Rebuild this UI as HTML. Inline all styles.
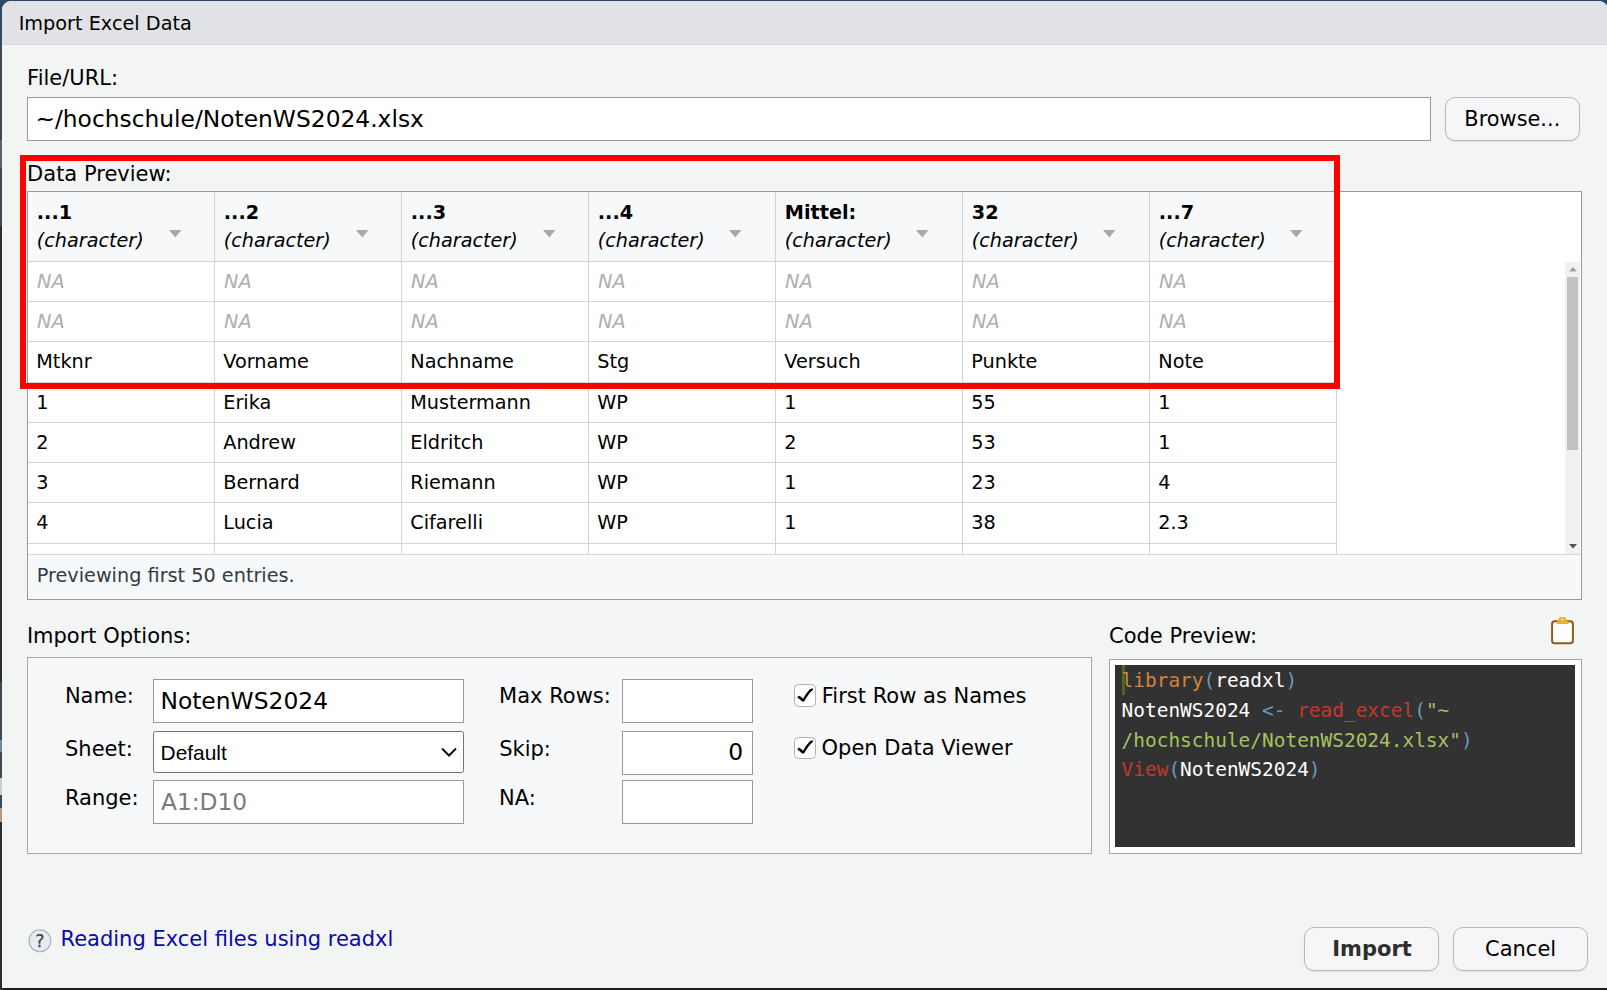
<!DOCTYPE html>
<html lang="en"><head><meta charset="utf-8"><title>Import Excel Data</title>
<style>
html,body{margin:0;padding:0}
body{width:1607px;height:990px;overflow:hidden;background:#1d1d1d;position:relative;font-family:"DejaVu Sans","Liberation Sans",sans-serif;color:#000}
.b{position:absolute;box-sizing:border-box}
.t{position:absolute;white-space:pre;line-height:1;display:block}
.inp{background:#fff;border:1px solid #999}
.btn{background:#f6f6f8;border:1px solid #b9b9b9;border-radius:10px;box-shadow:0 1px 1.5px rgba(0,0,0,.09)}
.pnl{background:#f7f8fa;border:1px solid #a6a6a6}
.hl{background:#cfd4d9}
.code{position:absolute;white-space:pre;line-height:1;font-family:"DejaVu Sans Mono","Liberation Mono",monospace;font-size:19.45px;color:#fff}
.k{color:#d08442}.p{color:#6c99bb}.f{color:#c4392b}.s{color:#a5c261}
</style></head><body>
<div class="b " style="left:0px;top:0px;width:1607.00px;height:4.00px;background:#2b4560"></div>
<div class="b " style="left:0px;top:0px;width:4.00px;height:990.00px;background:#2c2c2c"></div>
<div class="b " style="left:0px;top:0px;width:4.00px;height:226.00px;background:#3e4955"></div>
<div class="b " style="left:0px;top:140px;width:4.00px;height:28.00px;background:#59636e"></div>
<div class="b " style="left:0px;top:682px;width:4.00px;height:140.00px;background:#3e4955"></div>
<div class="b " style="left:0px;top:740px;width:4.00px;height:12.00px;background:#6f86a8"></div>
<div class="b " style="left:0px;top:778px;width:4.00px;height:17.00px;background:#c9d0c6"></div>
<div class="b " style="left:0px;top:808px;width:4.00px;height:14.00px;background:#b99a7c"></div>
<div class="b " style="left:0px;top:0px;width:12.00px;height:36.00px;background:#2f4a66"></div>
<div class="b " style="left:1595px;top:0px;width:12.00px;height:14.00px;background:#2b4560"></div>
<div class="b " style="left:2.3px;top:1px;width:1606.00px;height:987.00px;background:#f3f5f5;border-radius:9px 9px 0 0;overflow:hidden"></div>
<div class="b " style="left:2.3px;top:1px;width:1606.00px;height:43.50px;background:#e1e2e6;border-radius:9px 9px 0 0;border-bottom:1px solid #d3d8dd"></div>
<div class="b inp" style="left:27px;top:97px;width:1404.00px;height:44.00px;"></div>
<div class="b btn" style="left:1445px;top:97px;width:135.00px;height:44.00px;"></div>
<div class="b " style="left:27px;top:191px;width:1555.00px;height:409.00px;background:#fff;border:1px solid #9a9a9a"></div>
<div class="b " style="left:28px;top:192px;width:1308.50px;height:69.00px;background:#f7f8fa"></div>
<div class="b " style="left:28px;top:553.8px;width:1553.00px;height:45.20px;background:#f7f8fa;border-top:1px solid #d3d8de"></div>
<div class="b hl" style="left:28px;top:261px;width:1309.00px;height:1.00px;"></div>
<div class="b hl" style="left:28px;top:301px;width:1309.00px;height:1.00px;"></div>
<div class="b hl" style="left:28px;top:341px;width:1309.00px;height:1.00px;"></div>
<div class="b hl" style="left:28px;top:382px;width:1309.00px;height:1.00px;"></div>
<div class="b hl" style="left:28px;top:422px;width:1309.00px;height:1.00px;"></div>
<div class="b hl" style="left:28px;top:462px;width:1309.00px;height:1.00px;"></div>
<div class="b hl" style="left:28px;top:502px;width:1309.00px;height:1.00px;"></div>
<div class="b hl" style="left:28px;top:543px;width:1309.00px;height:1.00px;"></div>
<div class="b hl" style="left:214px;top:192px;width:1.00px;height:362.00px;"></div>
<div class="b hl" style="left:401px;top:192px;width:1.00px;height:362.00px;"></div>
<div class="b hl" style="left:588px;top:192px;width:1.00px;height:362.00px;"></div>
<div class="b hl" style="left:775px;top:192px;width:1.00px;height:362.00px;"></div>
<div class="b hl" style="left:962px;top:192px;width:1.00px;height:362.00px;"></div>
<div class="b hl" style="left:1149px;top:192px;width:1.00px;height:362.00px;"></div>
<div class="b hl" style="left:1336px;top:192px;width:1.00px;height:362.00px;"></div>
<svg class="b" style="left:168.9px;top:230.4px" width="13" height="8" viewBox="0 0 13 8"><path d="M0 0H12.5L6.25 7.4Z" fill="#a9a9a9"/></svg>
<svg class="b" style="left:355.70000000000005px;top:230.4px" width="13" height="8" viewBox="0 0 13 8"><path d="M0 0H12.5L6.25 7.4Z" fill="#a9a9a9"/></svg>
<svg class="b" style="left:542.5px;top:230.4px" width="13" height="8" viewBox="0 0 13 8"><path d="M0 0H12.5L6.25 7.4Z" fill="#a9a9a9"/></svg>
<svg class="b" style="left:729.3000000000001px;top:230.4px" width="13" height="8" viewBox="0 0 13 8"><path d="M0 0H12.5L6.25 7.4Z" fill="#a9a9a9"/></svg>
<svg class="b" style="left:916.1px;top:230.4px" width="13" height="8" viewBox="0 0 13 8"><path d="M0 0H12.5L6.25 7.4Z" fill="#a9a9a9"/></svg>
<svg class="b" style="left:1102.9px;top:230.4px" width="13" height="8" viewBox="0 0 13 8"><path d="M0 0H12.5L6.25 7.4Z" fill="#a9a9a9"/></svg>
<svg class="b" style="left:1289.7000000000003px;top:230.4px" width="13" height="8" viewBox="0 0 13 8"><path d="M0 0H12.5L6.25 7.4Z" fill="#a9a9a9"/></svg>
<div class="b " style="left:1565px;top:262px;width:15.00px;height:291.80px;background:#f1f1f1"></div>
<div class="b " style="left:1567px;top:277px;width:11.00px;height:173.00px;background:#c1c1c1"></div>
<svg class="b" style="left:1568.5px;top:267px" width="8" height="5" viewBox="0 0 8 5"><path d="M0 4.5L4 0L8 4.5Z" fill="#a3a3a3"/></svg>
<svg class="b" style="left:1568.5px;top:543.5px" width="8" height="5" viewBox="0 0 8 5"><path d="M0 0H8L4 4.5Z" fill="#505050"/></svg>
<div class="b pnl" style="left:27px;top:657px;width:1065.00px;height:197.00px;"></div>
<div class="b inp" style="left:153px;top:679px;width:311.00px;height:44.00px;"></div>
<div class="b " style="left:153px;top:731px;width:311.00px;height:42.00px;background:#fff;border:1px solid #747474;border-radius:2.5px"></div>
<svg class="b" style="left:439.9px;top:746.3px" width="18" height="12" viewBox="0 0 18 12"><path d="M2 2.5L9 9.5L16 2.5" fill="none" stroke="#111" stroke-width="2"/></svg>
<div class="b inp" style="left:153px;top:780px;width:311.00px;height:44.00px;"></div>
<div class="b inp" style="left:622px;top:679px;width:131.00px;height:44.00px;"></div>
<div class="b inp" style="left:622px;top:731px;width:131.00px;height:44.00px;"></div>
<div class="b inp" style="left:622px;top:780px;width:131.00px;height:44.00px;"></div>
<div class="b " style="left:794px;top:684px;width:22.00px;height:23.00px;background:#fff;border:1px solid #b2b2b2;border-radius:4.5px"></div>
<svg class="b" style="left:794px;top:684.0px" width="22" height="23" viewBox="0 0 22 23"><path d="M3.3 13.4Q4 12.2 5.2 11.8Q7.2 12.9 9.1 14.7Q12.2 9.2 15.6 5.6Q17.4 4.2 19.3 4.8L19 5.8Q15.4 8.6 12.5 13.6Q11.2 15.3 10.4 16.9Q9.2 18 7.8 17.3Q5.8 15 3.3 13.4Z" fill="#000"/></svg>
<div class="b " style="left:794px;top:737px;width:22.00px;height:21.60px;background:#fff;border:1px solid #b2b2b2;border-radius:4.5px"></div>
<svg class="b" style="left:794px;top:736.3px" width="22" height="23" viewBox="0 0 22 23"><path d="M3.3 13.4Q4 12.2 5.2 11.8Q7.2 12.9 9.1 14.7Q12.2 9.2 15.6 5.6Q17.4 4.2 19.3 4.8L19 5.8Q15.4 8.6 12.5 13.6Q11.2 15.3 10.4 16.9Q9.2 18 7.8 17.3Q5.8 15 3.3 13.4Z" fill="#000"/></svg>
<div class="b " style="left:1109px;top:659px;width:473.00px;height:195.00px;background:#fff;border:1px solid #a6a6a6"></div>
<div class="b " style="left:1115px;top:665px;width:460.00px;height:182.00px;background:#323232"></div>
<div class="b " style="left:1122.1px;top:665px;width:2.70px;height:29.70px;background:#4d6a1c"></div>
<span class="code" style="left:1121.6px;top:670.55px"><span class="k">library</span><span class="p">(</span>readxl<span class="p">)</span></span>
<span class="code" style="left:1121.6px;top:700.55px">NotenWS2024 <span class="p">&lt;-</span> <span class="f">read_excel</span><span class="p">(</span><span class="s">"~</span></span>
<span class="code" style="left:1121.6px;top:730.55px"><span class="s">/hochschule/NotenWS2024.xlsx"</span><span class="p">)</span></span>
<span class="code" style="left:1121.6px;top:759.55px"><span class="f">View</span><span class="p">(</span>NotenWS2024<span class="p">)</span></span>
<svg class="b" style="left:1548px;top:614px" width="30" height="34" viewBox="0 0 30 34">
<rect x="4.1" y="7.3" width="20.8" height="22" rx="2.6" fill="#fff" stroke="#905b18" stroke-width="2"/>
<path d="M10.9 4.5Q10.9 2.9 12.5 2.9H16.4Q18 2.9 18 4.5V6.2L20.4 7.6Q20.9 8 20.9 8.7Q20.9 9.9 19.7 9.9H9.5Q8.3 9.9 8.3 8.7Q8.3 8 8.8 7.6L10.9 6.2Z" fill="#e6b32b"/>
<circle cx="14.5" cy="5.5" r="0.9" fill="#fff6dc"/>
</svg>
<svg class="b" style="left:26px;top:927px" width="28" height="28" viewBox="0 0 28 28"><circle cx="13.9" cy="13.8" r="10.9" fill="#e8ecef" stroke="#a9b8c0" stroke-width="1.3"/></svg>
<div class="b btn" style="left:1304px;top:927px;width:134.50px;height:43.50px;"></div>
<div class="b btn" style="left:1453px;top:927px;width:134.50px;height:43.50px;"></div>
<div class="b " style="left:20px;top:155px;width:1320.00px;height:234.00px;border:6px solid #fe0000"></div>
<span class="t" style='left:18.70px;top:13.61px;font-size:19.25px;'>Import Excel Data</span>
<span class="t" style='left:27.10px;top:68.13px;font-size:21.0px;'>File/URL:</span>
<span class="t" style='left:35.40px;top:107.85px;font-size:23.35px;'>~/hochschule/NotenWS2024.xlsx</span>
<span class="t" style='left:1464.30px;top:109.32px;font-size:20.9px;'>Browse...</span>
<span class="t" style='left:27.10px;top:164.13px;font-size:21.0px;'>Data Preview:</span>
<span class="t" style='left:36.80px;top:203.31px;font-size:19.25px;font-weight:bold;'>...1</span>
<span class="t" style='left:36.80px;top:231.36px;font-size:19.2px;font-style:italic;'>(character)</span>
<span class="t" style='left:223.80px;top:203.31px;font-size:19.25px;font-weight:bold;'>...2</span>
<span class="t" style='left:223.80px;top:231.36px;font-size:19.2px;font-style:italic;'>(character)</span>
<span class="t" style='left:410.80px;top:203.31px;font-size:19.25px;font-weight:bold;'>...3</span>
<span class="t" style='left:410.80px;top:231.36px;font-size:19.2px;font-style:italic;'>(character)</span>
<span class="t" style='left:597.80px;top:203.31px;font-size:19.25px;font-weight:bold;'>...4</span>
<span class="t" style='left:597.80px;top:231.36px;font-size:19.2px;font-style:italic;'>(character)</span>
<span class="t" style='left:784.80px;top:203.31px;font-size:19.25px;font-weight:bold;'>Mittel:</span>
<span class="t" style='left:784.80px;top:231.36px;font-size:19.2px;font-style:italic;'>(character)</span>
<span class="t" style='left:971.80px;top:203.31px;font-size:19.25px;font-weight:bold;'>32</span>
<span class="t" style='left:971.80px;top:231.36px;font-size:19.2px;font-style:italic;'>(character)</span>
<span class="t" style='left:1158.80px;top:203.31px;font-size:19.25px;font-weight:bold;'>...7</span>
<span class="t" style='left:1158.80px;top:231.36px;font-size:19.2px;font-style:italic;'>(character)</span>
<span class="t" style='left:37.00px;top:271.71px;font-size:19.25px;font-style:italic;color:#adadad;'>NA</span>
<span class="t" style='left:224.00px;top:271.71px;font-size:19.25px;font-style:italic;color:#adadad;'>NA</span>
<span class="t" style='left:411.00px;top:271.71px;font-size:19.25px;font-style:italic;color:#adadad;'>NA</span>
<span class="t" style='left:598.00px;top:271.71px;font-size:19.25px;font-style:italic;color:#adadad;'>NA</span>
<span class="t" style='left:785.00px;top:271.71px;font-size:19.25px;font-style:italic;color:#adadad;'>NA</span>
<span class="t" style='left:972.00px;top:271.71px;font-size:19.25px;font-style:italic;color:#adadad;'>NA</span>
<span class="t" style='left:1159.00px;top:271.71px;font-size:19.25px;font-style:italic;color:#adadad;'>NA</span>
<span class="t" style='left:37.00px;top:311.71px;font-size:19.25px;font-style:italic;color:#adadad;'>NA</span>
<span class="t" style='left:224.00px;top:311.71px;font-size:19.25px;font-style:italic;color:#adadad;'>NA</span>
<span class="t" style='left:411.00px;top:311.71px;font-size:19.25px;font-style:italic;color:#adadad;'>NA</span>
<span class="t" style='left:598.00px;top:311.71px;font-size:19.25px;font-style:italic;color:#adadad;'>NA</span>
<span class="t" style='left:785.00px;top:311.71px;font-size:19.25px;font-style:italic;color:#adadad;'>NA</span>
<span class="t" style='left:972.00px;top:311.71px;font-size:19.25px;font-style:italic;color:#adadad;'>NA</span>
<span class="t" style='left:1159.00px;top:311.71px;font-size:19.25px;font-style:italic;color:#adadad;'>NA</span>
<span class="t" style='left:36.25px;top:351.71px;font-size:19.25px;'>Mtknr</span>
<span class="t" style='left:223.25px;top:351.71px;font-size:19.25px;'>Vorname</span>
<span class="t" style='left:410.25px;top:351.71px;font-size:19.25px;'>Nachname</span>
<span class="t" style='left:597.25px;top:351.71px;font-size:19.25px;'>Stg</span>
<span class="t" style='left:784.25px;top:351.71px;font-size:19.25px;'>Versuch</span>
<span class="t" style='left:971.25px;top:351.71px;font-size:19.25px;'>Punkte</span>
<span class="t" style='left:1158.25px;top:351.71px;font-size:19.25px;'>Note</span>
<span class="t" style='left:36.25px;top:392.71px;font-size:19.25px;'>1</span>
<span class="t" style='left:223.25px;top:392.71px;font-size:19.25px;'>Erika</span>
<span class="t" style='left:410.25px;top:392.71px;font-size:19.25px;'>Mustermann</span>
<span class="t" style='left:597.25px;top:392.71px;font-size:19.25px;'>WP</span>
<span class="t" style='left:784.25px;top:392.71px;font-size:19.25px;'>1</span>
<span class="t" style='left:971.25px;top:392.71px;font-size:19.25px;'>55</span>
<span class="t" style='left:1158.25px;top:392.71px;font-size:19.25px;'>1</span>
<span class="t" style='left:36.25px;top:432.71px;font-size:19.25px;'>2</span>
<span class="t" style='left:223.25px;top:432.71px;font-size:19.25px;'>Andrew</span>
<span class="t" style='left:410.25px;top:432.71px;font-size:19.25px;'>Eldritch</span>
<span class="t" style='left:597.25px;top:432.71px;font-size:19.25px;'>WP</span>
<span class="t" style='left:784.25px;top:432.71px;font-size:19.25px;'>2</span>
<span class="t" style='left:971.25px;top:432.71px;font-size:19.25px;'>53</span>
<span class="t" style='left:1158.25px;top:432.71px;font-size:19.25px;'>1</span>
<span class="t" style='left:36.25px;top:472.71px;font-size:19.25px;'>3</span>
<span class="t" style='left:223.25px;top:472.71px;font-size:19.25px;'>Bernard</span>
<span class="t" style='left:410.25px;top:472.71px;font-size:19.25px;'>Riemann</span>
<span class="t" style='left:597.25px;top:472.71px;font-size:19.25px;'>WP</span>
<span class="t" style='left:784.25px;top:472.71px;font-size:19.25px;'>1</span>
<span class="t" style='left:971.25px;top:472.71px;font-size:19.25px;'>23</span>
<span class="t" style='left:1158.25px;top:472.71px;font-size:19.25px;'>4</span>
<span class="t" style='left:36.25px;top:512.71px;font-size:19.25px;'>4</span>
<span class="t" style='left:223.25px;top:512.71px;font-size:19.25px;'>Lucia</span>
<span class="t" style='left:410.25px;top:512.71px;font-size:19.25px;'>Cifarelli</span>
<span class="t" style='left:597.25px;top:512.71px;font-size:19.25px;'>WP</span>
<span class="t" style='left:784.25px;top:512.71px;font-size:19.25px;'>1</span>
<span class="t" style='left:971.25px;top:512.71px;font-size:19.25px;'>38</span>
<span class="t" style='left:1158.25px;top:512.71px;font-size:19.25px;'>2.3</span>
<span class="t" style='left:36.70px;top:566.41px;font-size:19.25px;color:#333b44;'>Previewing first 50 entries.</span>
<span class="t" style='left:26.90px;top:626.13px;font-size:21.0px;'>Import Options:</span>
<span class="t" style='left:1109.00px;top:626.23px;font-size:21.0px;'>Code Preview:</span>
<span class="t" style='left:64.90px;top:686.23px;font-size:21.0px;'>Name:</span>
<span class="t" style='left:65.00px;top:738.73px;font-size:21.0px;'>Sheet:</span>
<span class="t" style='left:64.90px;top:788.23px;font-size:21.0px;'>Range:</span>
<span class="t" style='left:160.40px;top:689.80px;font-size:23.4px;'>NotenWS2024</span>
<span class="t" style='left:160.60px;top:742.92px;font-size:20.9px;font-family:"Liberation Sans", "DejaVu Sans", sans-serif;'>Default</span>
<span class="t" style='left:161.00px;top:789.89px;font-size:23.3px;color:#7b7b7b;'>A1:D10</span>
<span class="t" style='left:499.10px;top:686.23px;font-size:21.0px;'>Max Rows:</span>
<span class="t" style='left:499.20px;top:738.73px;font-size:21.0px;'>Skip:</span>
<span class="t" style='left:499.10px;top:788.23px;font-size:21.0px;'>NA:</span>
<span class="t" style='left:728.30px;top:741.40px;font-size:23.4px;'>0</span>
<span class="t" style='left:821.80px;top:686.23px;font-size:21.0px;'>First Row as Names</span>
<span class="t" style='left:821.60px;top:738.13px;font-size:21.0px;'>Open Data Viewer</span>
<span class="t" style='left:60.50px;top:928.83px;font-size:21.0px;color:#0a0aa6;'>Reading Excel files using readxl</span>
<span class="t" style='left:1332.30px;top:939.43px;font-size:21.0px;font-weight:bold;color:#2e2e2e;'>Import</span>
<span class="t" style='left:1485.00px;top:939.43px;font-size:21.0px;'>Cancel</span>
<span class="t" style='left:35.20px;top:933.28px;font-size:17.4px;color:#3b4652;-webkit-text-stroke:0.25px #3b4652;'>?</span>
</body></html>
